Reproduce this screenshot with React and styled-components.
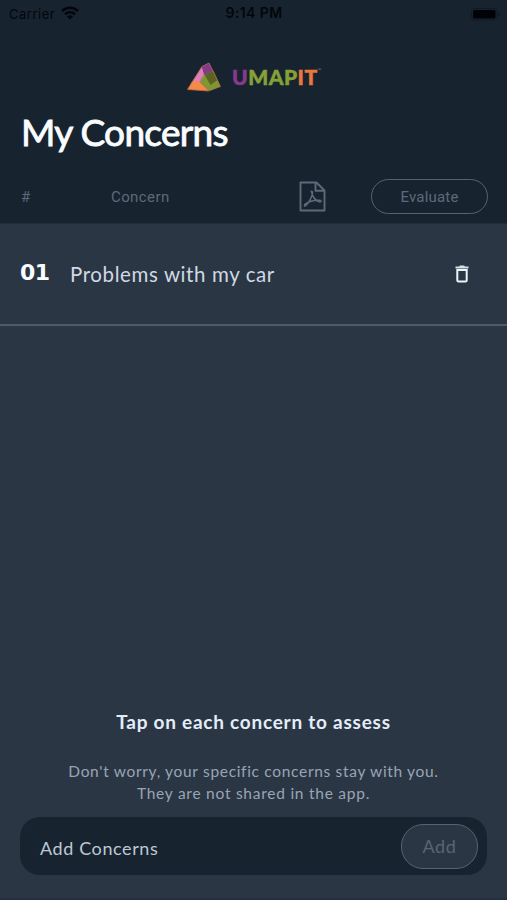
import { useState } from "react";
import styled, { createGlobalStyle } from "styled-components";

function App() {

  const [concerns] = useState(["Problems with my car"]);

  return (
    <Screen>
      <GlobalStyle />
      <Header>
        <StatusBar>
          <Carrier>
            <span>Carrier</span>
            <WifiIcon />
          </Carrier>
          <Time>9:14 PM</Time>
          <BatteryIcon />
        </StatusBar>
        <Brand>
          <PrismLogo />
          <BrandName>
            <Letters $color="#873a8c">U</Letters>
            <Letters $color="#86a038">MAP</Letters>
            <Letters $color="#ea773e">IT</Letters>
            <sup>™</sup>
          </BrandName>
        </Brand>
        <Title>My Concerns</Title>
        <Columns>
          <span>#</span>
          <span>Concern</span>
          <PdfIcon />
          <EvaluateButton>Evaluate</EvaluateButton>
        </Columns>
      </Header>

      <List>
        {concerns.map((concern, index) => (
          <Item key={concern}>
            <Index>{String(index + 1).padStart(2, "0")}</Index>
            <Name>{concern}</Name>
            <TrashIcon />
          </Item>
        ))}
      </List>

      <Hint>
        <h2>Tap on each concern to assess</h2>
        <Note $spacing="0.68px">Don't worry, your specific concerns stay with you.</Note>
        <Note $spacing="0.75px">They are not shared in the app.</Note>
      </Hint>

      <AddBar>
        <span>Add Concerns</span>
        <AddButton>Add</AddButton>
      </AddBar>
    </Screen>
  );
}

function WifiIcon() {
  return (
    <svg width="18" height="14" viewBox="0 0 18 14" fill="none" stroke="#02060b" strokeWidth="2.5">
      <path d="M1 5.2C5.5.7 12.5.7 17 5.2" />
      <path d="M4 8.3C6.8 5.5 11.2 5.5 14 8.3" />
      <path d="M9 13.5L5.9 10.4C7.7 8.9 10.3 8.9 12.1 10.4Z" fill="#02060b" stroke="none" />
    </svg>
  );
}

function BatteryIcon() {
  return (
    <svg width="30" height="13" viewBox="0 0 30 13">
      <rect x="0.5" y="0.5" width="25.5" height="11.5" rx="3" fill="none" stroke="#101a25" />
      <rect x="2" y="2" width="22.5" height="8.5" rx="1.5" fill="#000205" />
      <path d="M27.5 4.5C29 5 29 7.5 27.5 8Z" fill="#0c141e" />
    </svg>
  );
}

function PrismLogo() {
  return (
    <svg width="34" height="30" viewBox="0 0 34 30">
      <path d="M15 4.5L5 20H12.5L17 11.5Z" fill="#d881bd" />
      <path d="M5 19.5L0.5 27.5L21.5 29L12.5 19.5Z" fill="#f58a45" />
      <path d="M17 11L12.5 19.5L21.5 29Z" fill="#e98485" />
      <path d="M15 4.5L22 1L26.5 9.5L17.5 13Z" fill="#85398b" />
      <path d="M17.5 12.5L26.5 9L33.5 24.5L22 29L13 19.5Z" fill="#7f9633" />
      <path d="M17.5 12.5L26.5 9L30.5 18L23.5 23Z" fill="#596423" />
      <path d="M22 1L15 4.5L0.5 27.5L21.5 29L33.5 24.5Z" fill="none" stroke="#b96a45" strokeWidth="0.8" strokeLinejoin="round" />
    </svg>
  );
}

function PdfIcon() {
  return (
    <svg width="28" height="31" viewBox="0 0 28 31" fill="none" stroke="#5e6a78" strokeWidth="1.9" strokeLinejoin="round">
      <path d="M1.5 1.5H17.5L25.5 9.5V29.5H1.5Z" />
      <path d="M16.5 1.5V9.8H25.5" />
      <path strokeWidth="1.5" d="M12.5 11C11.3 9.7 14.3 9.7 13.4 12.5C12.5 17 9 22.5 6.2 25C5.2 25.5 5 24 6.5 22.9C10 20.5 16 18.9 20.5 19.3C23.5 20 21.5 21.5 19.5 20.6C16 19 13.6 15.5 12.5 11Z" />
    </svg>
  );
}

function TrashIcon() {
  return (
    <svg width="14" height="18" viewBox="0 0 14 18">
      <path d="M0.5 1.5H4L5 0.5H9L10 1.5H13.5V3.5H0.5Z" fill="#d5dee7" />
      <path d="M2.3 5H11.7V15.2Q11.7 16.5 10.4 16.5H3.6Q2.3 16.5 2.3 15.2Z" fill="none" stroke="#edf4f8" strokeWidth="2" />
    </svg>
  );
}

const GlobalStyle = createGlobalStyle`
  * {
    box-sizing: border-box;
  }
  body {
    margin: 0;
    background: #2b3644;
  }
`;

const Screen = styled.div`
  height: 900px;
  display: flex;
  flex-direction: column;
  background: #2b3644;
  border-bottom: 2px solid #243041;
  font-family: Lato, sans-serif;
`;

const Header = styled.header`
  height: 224px;
  background: #182330;
  border-bottom: 1px solid #212c39;
`;

const StatusBar = styled.div`
  height: 28px;
  padding: 0 6px 0 9px;
  display: grid;
  grid-template-columns: 1fr auto 1fr;
  align-items: center;
  color: #02060b;
  font-family: Inter, sans-serif;
  font-size: 13px;

  > svg {
    justify-self: end;
  }
`;

const Carrier = styled.div`
  display: flex;
  align-items: center;
  gap: 6px;
  letter-spacing: 0.5px;

  svg {
    margin-top: -2px;
  }
`;

const Time = styled.span`
  margin-left: -2px;
  font-size: 14px;
  font-weight: 600;
  line-height: 16px;
  padding-bottom: 2px;
  letter-spacing: 0.4px;
`;

const Brand = styled.div`
  height: 30px;
  margin-top: 34px;
  padding-left: 187px;
  display: flex;
  align-items: center;
`;

const BrandName = styled.div`
  display: flex;
  margin-left: 11px;
  padding-bottom: 1px;
  font-size: 21px;
  font-weight: 900;
  line-height: 30px;
  letter-spacing: 0.5px;
  -webkit-text-stroke: 0.5px currentColor;

  sup {
    color: #6d6263;
    font-size: 5px;
    line-height: 16px;
    -webkit-text-stroke: 0;
  }
`;

const Letters = styled.span`
  color: ${(props) => props.$color};
  -webkit-text-stroke-color: ${(props) => props.$color};
`;

const Title = styled.h1`
  margin: 16px 0 0 21px;
  color: #f9fdff;
  font-size: 37px;
  font-weight: 400;
  line-height: 48px;
  letter-spacing: -0.7px;
  -webkit-text-stroke: 0.9px currentColor;
`;

const Columns = styled.div`
  height: 35px;
  margin-top: 23px;
  padding: 0 19px 0 21px;
  display: grid;
  grid-template-columns: 90px 188px 72px 1fr;
  align-items: center;
  color: #5e6a78;
  font-family: Roboto, sans-serif;
  font-size: 15px;
  letter-spacing: 0.4px;
`;

const EvaluateButton = styled.button`
  height: 35px;
  padding: 0;
  color: #5e6a78;
  background: none;
  border: 1.5px solid #566270;
  border-radius: 18px;
  font: inherit;
  letter-spacing: 0.2px;
`;

const List = styled.div`
  flex: 1;
`;

const Item = styled.div`
  height: 102px;
  padding: 0 38px 1px 20px;
  display: flex;
  align-items: center;
  border-bottom: 2px solid #4f5b69;

  svg {
    margin-left: auto;
  }
`;

const Index = styled.span`
  width: 50px;
  padding-bottom: 3px;
  color: #fafdff;
  font-family: "DejaVu Sans", sans-serif;
  font-size: 22px;
  font-weight: 700;
  letter-spacing: -0.5px;
`;

const Name = styled.span`
  color: #d0d9e2;
  font-size: 20.5px;
  letter-spacing: 0.6px;
`;

const Hint = styled.div`
  margin-bottom: 13px;
  text-align: center;

  h2 {
    margin: 0 0 26px;
    color: #e3edf9;
    font-size: 19px;
    font-weight: 700;
    line-height: 24px;
    letter-spacing: 0.75px;
  }
`;

const Note = styled.p`
  margin: 0;
  color: #98a5b5;
  font-size: 15.5px;
  line-height: 22px;
  letter-spacing: ${(props) => props.$spacing};
`;

const AddBar = styled.div`
  height: 58px;
  margin: 0 20px 23px;
  padding: 0 9px 0 20px;
  display: flex;
  align-items: center;
  justify-content: space-between;
  color: #bdc8d4;
  background: #182330;
  border-radius: 20px;
  font-size: 18px;
  letter-spacing: 0.6px;

  span {
    padding-top: 3px;
  }
`;

const AddButton = styled.button`
  width: 77px;
  height: 45px;
  padding: 0;
  color: #596573;
  background: #2b3644;
  border: 1.5px solid #566270;
  border-radius: 22px;
  font: inherit;
  letter-spacing: 0.7px;
`;

export default App;
